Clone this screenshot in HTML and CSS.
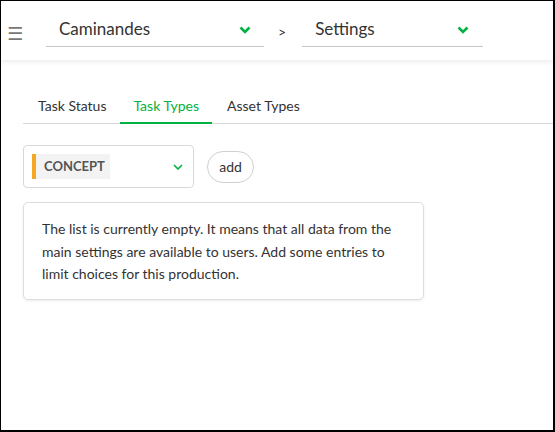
FILE: index.html
```html
<!DOCTYPE html>
<html>
<head>
<meta charset="utf-8">
<link rel="stylesheet" href="styles.css">
</head>
<body>
<div class="frame">
  <header class="topbar">
    <span class="burger">☰</span>
    <div class="combo combo-prod">
      <span class="combo-label">Caminandes</span>
      <svg class="chev" width="12" height="8" viewBox="0 0 12 8"><path d="M1.5 1.5 L6 6 L10.5 1.5" fill="none" stroke="#00b242" stroke-width="2.6"/></svg>
    </div>
    <span class="sep">&gt;</span>
    <div class="combo combo-section">
      <span class="combo-label">Settings</span>
      <svg class="chev" width="12" height="8" viewBox="0 0 12 8"><path d="M1.5 1.5 L6 6 L10.5 1.5" fill="none" stroke="#00b242" stroke-width="2.6"/></svg>
    </div>
  </header>
  <main class="content">
    <nav class="tabs">
      <span class="tab">Task Status</span>
      <span class="tab active">Task Types</span>
      <span class="tab">Asset Types</span>
    </nav>
    <div class="add-row">
      <div class="type-select">
        <span class="type-tag">CONCEPT</span>
        <svg class="chev-small" width="10" height="6" viewBox="0 0 10 6"><path d="M1 1 L5 5 L9 1" fill="none" stroke="#00b242" stroke-width="1.6"/></svg>
      </div>
      <button class="add-btn">add</button>
    </div>
    <div class="info-box">
      The list is currently empty. It means that all data from the main settings are available to users. Add some entries to limit choices for this production.
    </div>
  </main>
</div>
</body>
</html>
```

FILE: styles.css
```css
html, body {
  margin: 0;
  padding: 0;
  background: #ffffff;
}
body {
  font-family: Lato, "Open Sans", sans-serif;
  color: #333333;
}
.frame {
  box-sizing: border-box;
  width: 555px;
  height: 432px;
  border-top: 1px solid #000;
  border-left: 1px solid #000;
  border-right: 2px solid #000;
  border-bottom: 2px solid #000;
  overflow: hidden;
}
.topbar {
  height: 59px;
  display: flex;
  align-items: flex-start;
  box-shadow: 0 2px 5px rgba(0,0,0,0.08);
  position: relative;
}
.burger {
  font-family: "DejaVu Sans", sans-serif;
  font-size: 18px;
  color: #777;
  margin: 23px 0 0 6px;
  line-height: 20px;
  width: 16px;
}
.combo {
  margin-top: 14px;
  height: 32px;
  border-bottom: 1px solid #c8c8c8;
  display: flex;
  align-items: flex-start;
  box-sizing: border-box;
  padding-top: 3px;
}
.combo-prod {
  margin-left: 23px;
  width: 218px;
  padding-left: 13px;
  padding-right: 13px;
}
.combo-section {
  width: 181px;
  padding-left: 13px;
  padding-right: 14px;
}
.combo-label {
  flex: 1;
  font-size: 17px;
  line-height: 22px;
  color: #333;
}
.chev { display: block; margin-top: 8px; }
.sep {
  font-size: 14px;
  color: #333;
  margin: 23px 16px 0 14px;
  line-height: 16px;
}
.content {
  padding: 0 0 0 22px;
}
.tabs {
  margin-top: 36px;
  display: flex;
  border-bottom: 1px solid #d8d8d8;
  height: 27px;
  box-sizing: content-box;
}
.tab {
  font-size: 14px;
  color: #333;
  padding: 0 14px 0 15px;
  line-height: 20px;
  height: 27px;
  box-sizing: border-box;
}
.tab.active {
  color: #00b242;
  border-bottom: 2px solid #00b242;
  height: 28px;
  padding: 0 13px 0 13px;
}
.add-row {
  display: flex;
  align-items: center;
  margin-top: 21px;
}
.type-select {
  box-sizing: border-box;
  width: 171px;
  height: 43px;
  border: 1px solid #d8d8d8;
  border-radius: 4px;
  display: flex;
  align-items: center;
  padding: 0 10px 0 8px;
  justify-content: space-between;
}
.type-tag {
  background: #f3f3f3;
  border-left: 4px solid #f5a623;
  font-size: 13px;
  font-weight: 700;
  color: #555;
  height: 25px;
  line-height: 25px;
  padding: 0 8px 0 8px;
  width: 58px;
}
.chev-small { display: block; }
.add-btn {
  margin-left: 13px;
  font-family: inherit;
  font-size: 14px;
  color: #333;
  background: #fff;
  border: 1px solid #d0d0d0;
  border-radius: 16px;
  height: 32px;
  width: 47px;
  padding: 0;
}
.info-box {
  box-sizing: border-box;
  margin-top: 14px;
  width: 401px;
  border: 1px solid #dddddd;
  border-radius: 5px;
  box-shadow: 0 1px 3px rgba(0,0,0,0.08);
  padding: 15px 18px 13px 18px;
  font-size: 14px;
  line-height: 22.5px;
  color: #333;
}
```
